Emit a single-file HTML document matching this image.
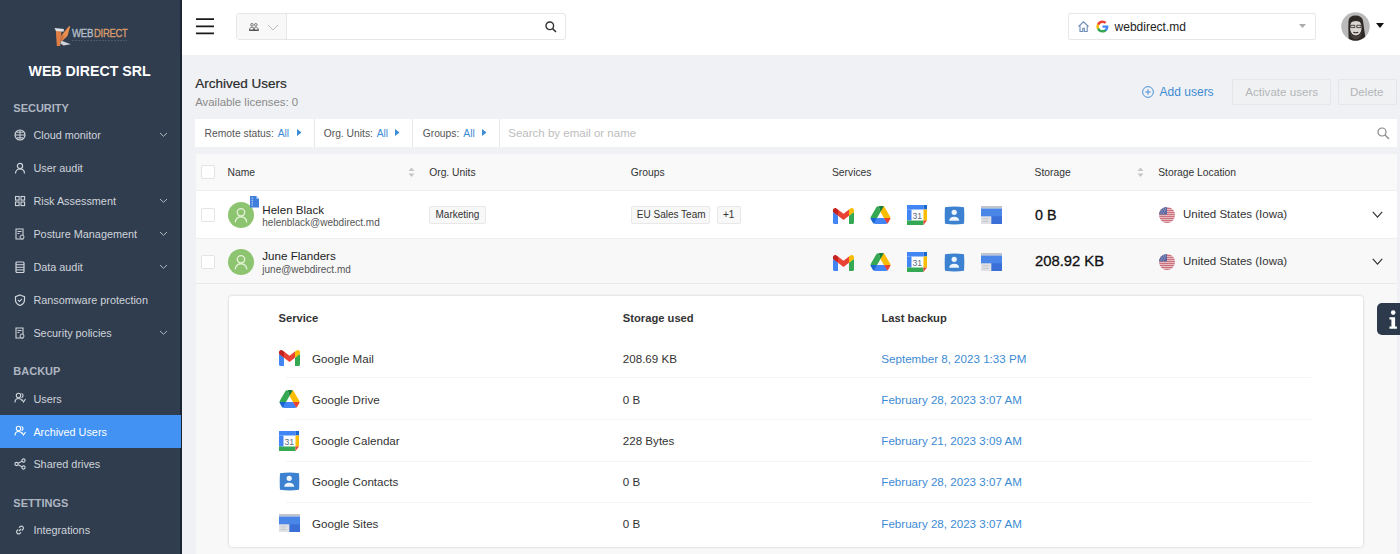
<!DOCTYPE html>
<html><head><meta charset="utf-8"><style>
html,body{margin:0;padding:0;width:1400px;height:554px;overflow:hidden;position:relative;font-family:'Liberation Sans', sans-serif}
.t{position:absolute;line-height:1;white-space:nowrap}
</style></head><body>
<div style="position:absolute;left:0px;top:0px;width:1400px;height:554px;background:#eff1f4"></div>
<div style="position:absolute;left:0px;top:0px;width:180px;height:554px;background:#2f3d4f"></div>
<div style="position:absolute;left:180px;top:0px;width:2px;height:554px;background:#1c2534"></div>
<div style="position:absolute;left:182px;top:0px;width:1218px;height:55px;background:#fff"></div>
<svg style="position:absolute;left:54px;top:25px" width="18" height="22" viewBox="0 0 18 22"><path d="M1.8 5.5 L7.5 6.5 L6.2 21 L2.8 21 Z" fill="#e07f45"/>
<path d="M10 7 L15.2 1 L16.2 1.5 L13.5 11 L7 17 L6.6 12 Z" fill="#ea8c4c"/>
<path d="M0.5 3 L10 4 L9.5 6.8 L2 6 Z" fill="#dfe2e5"/>
<path d="M7 15.5 L16.8 19.2 L9.5 20.5 L6.5 18.5 Z" fill="#cfd3d7"/>
<path d="M6.5 12 L10.5 10 L7.3 17z" fill="#c8703e"/></svg>
<div class="t" style="left:72.0px;top:28.24px;font-size:10.7px;color:#b5bec8;font-weight:400;transform:scaleX(0.9);transform-origin:left;-webkit-text-stroke:0.35px #b5bec8;letter-spacing:-0.3px">WEB</div>
<div class="t" style="left:94.3px;top:28.24px;font-size:10.7px;color:#d99c6c;font-weight:400;transform:scaleX(0.88);transform-origin:left;-webkit-text-stroke:0.35px #d99c6c;letter-spacing:-0.3px">DIRECT</div>
<div style="position:absolute;left:72px;top:39.5px;width:55px;height:1.5px;background:repeating-linear-gradient(90deg,#7d8b9c 0 2px,transparent 2px 3px);opacity:.35"></div>
<div class="t" style="left:28.5px;top:63.68px;font-size:14.2px;color:#ffffff;font-weight:700;">WEB DIRECT SRL</div>
<div class="t" style="left:13.3px;top:102.89px;font-size:11px;color:#aeb6c1;font-weight:700;">SECURITY</div>
<svg style="position:absolute;left:14px;top:128.7px" width="12" height="12" viewBox="0 0 12 12"><circle cx="6" cy="6" r="5" fill="none" stroke="#cfd4da" stroke-width="1.2"/><path d="M1 6h10M6 1v10M3 3.2h6M3 8.8h6" stroke="#cfd4da" stroke-width="1"/></svg>
<div class="t" style="left:33.4px;top:130.02px;font-size:10.85px;color:#cfd4da;font-weight:400;">Cloud monitor</div>
<svg style="position:absolute;left:158.5px;top:132.39999999999998px" width="9" height="6" viewBox="0 0 9 6"><path d="M1 1l3.5 3.3L8 1" fill="none" stroke="#b3bac3" stroke-width="1"/></svg>
<svg style="position:absolute;left:14px;top:161.7px" width="12" height="12" viewBox="0 0 12 12"><circle cx="6" cy="4" r="2.6" fill="none" stroke="#cfd4da" stroke-width="1.2"/><path d="M1.5 11.5c0-3 2-4.5 4.5-4.5s4.5 1.5 4.5 4.5" fill="none" stroke="#cfd4da" stroke-width="1.2"/></svg>
<div class="t" style="left:33.4px;top:163.02px;font-size:10.85px;color:#cfd4da;font-weight:400;">User audit</div>
<svg style="position:absolute;left:14px;top:194.7px" width="12" height="12" viewBox="0 0 12 12"><rect x="1.5" y="1.5" width="3.6" height="3.6" fill="none" stroke="#cfd4da" stroke-width="1.1"/><rect x="7" y="1.5" width="3.6" height="3.6" fill="none" stroke="#cfd4da" stroke-width="1.1"/><rect x="1.5" y="7" width="3.6" height="3.6" fill="none" stroke="#cfd4da" stroke-width="1.1"/><rect x="7" y="7" width="3.6" height="3.6" fill="none" stroke="#cfd4da" stroke-width="1.1"/></svg>
<div class="t" style="left:33.4px;top:196.02px;font-size:10.85px;color:#cfd4da;font-weight:400;">Risk Assessment</div>
<svg style="position:absolute;left:158.5px;top:198.39999999999998px" width="9" height="6" viewBox="0 0 9 6"><path d="M1 1l3.5 3.3L8 1" fill="none" stroke="#b3bac3" stroke-width="1"/></svg>
<svg style="position:absolute;left:14px;top:227.7px" width="12" height="12" viewBox="0 0 12 12"><path d="M2 1h7v10H2z" fill="none" stroke="#cfd4da" stroke-width="1.1"/><path d="M3.5 3.5h4M3.5 5.5h2" stroke="#cfd4da" stroke-width="1"/><circle cx="8" cy="9" r="2" fill="#2f3d4f" stroke="#cfd4da" stroke-width="1"/></svg>
<div class="t" style="left:33.4px;top:229.02px;font-size:10.85px;color:#cfd4da;font-weight:400;">Posture Management</div>
<svg style="position:absolute;left:158.5px;top:231.39999999999998px" width="9" height="6" viewBox="0 0 9 6"><path d="M1 1l3.5 3.3L8 1" fill="none" stroke="#b3bac3" stroke-width="1"/></svg>
<svg style="position:absolute;left:14px;top:260.7px" width="12" height="12" viewBox="0 0 12 12"><rect x="2" y="1" width="8" height="10.5" rx="1" fill="none" stroke="#cfd4da" stroke-width="1.2"/><path d="M2 3.7h8M2 6.3h8M2 8.9h8" stroke="#cfd4da" stroke-width="1"/></svg>
<div class="t" style="left:33.4px;top:262.02px;font-size:10.85px;color:#cfd4da;font-weight:400;">Data audit</div>
<svg style="position:absolute;left:158.5px;top:264.4px" width="9" height="6" viewBox="0 0 9 6"><path d="M1 1l3.5 3.3L8 1" fill="none" stroke="#b3bac3" stroke-width="1"/></svg>
<svg style="position:absolute;left:14px;top:293.7px" width="12" height="12" viewBox="0 0 12 12"><path d="M6 1L10.5 2.6V6c0 3-2.2 4.6-4.5 5.5C3.7 10.6 1.5 9 1.5 6V2.6z" fill="none" stroke="#cfd4da" stroke-width="1.2"/><path d="M4 6l1.5 1.5L8 4.8" fill="none" stroke="#cfd4da" stroke-width="1.1"/></svg>
<div class="t" style="left:33.4px;top:295.02px;font-size:10.85px;color:#cfd4da;font-weight:400;">Ransomware protection</div>
<svg style="position:absolute;left:14px;top:326.7px" width="12" height="12" viewBox="0 0 12 12"><path d="M2 1h7v10H2z" fill="none" stroke="#cfd4da" stroke-width="1.1"/><path d="M3.5 3.5h4M3.5 5.5h2" stroke="#cfd4da" stroke-width="1"/><circle cx="8" cy="9" r="2" fill="#2f3d4f" stroke="#cfd4da" stroke-width="1"/></svg>
<div class="t" style="left:33.4px;top:328.02px;font-size:10.85px;color:#cfd4da;font-weight:400;">Security policies</div>
<svg style="position:absolute;left:158.5px;top:330.4px" width="9" height="6" viewBox="0 0 9 6"><path d="M1 1l3.5 3.3L8 1" fill="none" stroke="#b3bac3" stroke-width="1"/></svg>
<div class="t" style="left:13.3px;top:366.29px;font-size:11px;color:#aeb6c1;font-weight:700;">BACKUP</div>
<svg style="position:absolute;left:14px;top:392.2px" width="12" height="12" viewBox="0 0 12 12"><circle cx="4.5" cy="3.5" r="2.2" fill="none" stroke="#cfd4da" stroke-width="1.1"/><path d="M1 10.5c0-2.5 1.5-4 3.5-4s3 1 3.3 2.2" fill="none" stroke="#cfd4da" stroke-width="1.1"/><path d="M7.5 1.5a2.2 2.2 0 0 1 0 4.2M8 7.5l1.5 2.5 2-3" fill="none" stroke="#cfd4da" stroke-width="1.1"/></svg>
<div class="t" style="left:33.4px;top:393.52px;font-size:10.85px;color:#cfd4da;font-weight:400;">Users</div>
<div style="position:absolute;left:0px;top:414.5px;width:181px;height:33.5px;background:#4192f2"></div>
<svg style="position:absolute;left:14px;top:425.3px" width="12" height="12" viewBox="0 0 12 12"><circle cx="4.5" cy="3.5" r="2.2" fill="none" stroke="#ffffff" stroke-width="1.1"/><path d="M1 10.5c0-2.5 1.5-4 3.5-4s3 1 3.3 2.2" fill="none" stroke="#ffffff" stroke-width="1.1"/><path d="M7.5 1.5a2.2 2.2 0 0 1 0 4.2M8 7.5l1.5 2.5 2-3" fill="none" stroke="#ffffff" stroke-width="1.1"/></svg>
<div class="t" style="left:33.4px;top:426.62px;font-size:10.85px;color:#ffffff;font-weight:400;">Archived Users</div>
<svg style="position:absolute;left:14px;top:458.1px" width="12" height="12" viewBox="0 0 12 12"><circle cx="2.5" cy="6" r="1.6" fill="none" stroke="#cfd4da" stroke-width="1.1"/><circle cx="9.5" cy="2.5" r="1.6" fill="none" stroke="#cfd4da" stroke-width="1.1"/><circle cx="9.5" cy="9.5" r="1.6" fill="none" stroke="#cfd4da" stroke-width="1.1"/><path d="M4 5.2l4-2M4 6.8l4 2" stroke="#cfd4da" stroke-width="1.1"/></svg>
<div class="t" style="left:33.4px;top:459.42px;font-size:10.85px;color:#cfd4da;font-weight:400;">Shared drives</div>
<div class="t" style="left:13.3px;top:498.39px;font-size:11px;color:#aeb6c1;font-weight:700;">SETTINGS</div>
<svg style="position:absolute;left:14px;top:523.9px" width="12" height="12" viewBox="0 0 12 12"><path d="M5 7l2-2M4.2 5.5L3 6.7a2 2 0 0 0 2.8 2.8L7 8.3M7.8 6.5L9 5.3A2 2 0 0 0 6.2 2.5L5 3.7" fill="none" stroke="#cfd4da" stroke-width="1.2"/></svg>
<div class="t" style="left:33.4px;top:525.22px;font-size:10.85px;color:#cfd4da;font-weight:400;">Integrations</div>
<svg style="position:absolute;left:196px;top:17px" width="18" height="18" viewBox="0 0 18 18"><path d="M0 2.1h18M0 9.3h18M0 16.3h18" stroke="#1a1a1a" stroke-width="1.7"/></svg>
<div style="position:absolute;left:236px;top:13px;width:330px;height:27px;background:#fff;border:1px solid #e6e6e6;border-radius:3px;box-sizing:border-box"></div>
<div style="position:absolute;left:237px;top:14px;width:50px;height:25px;background:#f8f8f8"></div>
<div style="position:absolute;left:286px;top:14px;width:1px;height:25px;background:#e6e6e6"></div>
<svg style="position:absolute;left:248.5px;top:23px" width="10" height="8" viewBox="0 0 10 8"><circle cx="3" cy="1.8" r="1.3" fill="none" stroke="#666" stroke-width=".9"/><circle cx="6.8" cy="1.8" r="1.3" fill="none" stroke="#666" stroke-width=".9"/><path d="M0.4 7.2c0-1.9 1.1-3 2.6-3s2.6 1.1 2.6 3zM4.4 7.2c.2-1.9 1-3 2.4-3s2.6 1.1 2.6 3z" fill="none" stroke="#666" stroke-width=".9"/><path d="M0.3 7.3h9.3" stroke="#444" stroke-width="1.1"/></svg>
<svg style="position:absolute;left:267px;top:24px" width="12" height="7" viewBox="0 0 12 7"><path d="M1 1l5 5 5-5" fill="none" stroke="#bbb" stroke-width="1"/></svg>
<svg style="position:absolute;left:545px;top:21px" width="12" height="12" viewBox="0 0 12 12"><circle cx="4.8" cy="4.8" r="3.8" fill="none" stroke="#333" stroke-width="1.4"/><path d="M7.6 7.6L11 11" stroke="#333" stroke-width="1.5"/></svg>
<div style="position:absolute;left:1068px;top:13px;width:248px;height:27px;background:#fff;border:1px solid #e6e6e6;border-radius:2px;box-sizing:border-box"></div>
<svg style="position:absolute;left:1077px;top:20px" width="13" height="13" viewBox="0 0 13 13"><path d="M1.5 6.5L6.5 1.8l5 4.7M3 5.3v6.2h2.8V8.3h1.6v3.2h2.8V5.3" fill="none" stroke="#6d8fb8" stroke-width="1.1"/></svg>
<svg style="position:absolute;left:1096px;top:20px" width="13" height="13" viewBox="0 0 13 13"><path d="M12.4 6.6c0-.4 0-.8-.1-1.2H6.5v2.3h3.3a2.8 2.8 0 0 1-1.2 1.8v1.5h2c1.1-1 1.8-2.6 1.8-4.4z" fill="#4285F4"/>
<path d="M6.5 12.5c1.6 0 3-.5 4-1.5l-2-1.5c-.5.4-1.2.6-2 .6-1.6 0-2.9-1-3.4-2.4H1.1v1.6a6 6 0 0 0 5.4 3.2z" fill="#34A853"/>
<path d="M3.1 7.7a3.6 3.6 0 0 1 0-2.4V3.7H1.1a6 6 0 0 0 0 5.6z" fill="#FBBC05"/>
<path d="M6.5 2.9c.9 0 1.7.3 2.3.9l1.7-1.7A6 6 0 0 0 1.1 3.7l2 1.6c.5-1.4 1.8-2.4 3.4-2.4z" fill="#EA4335"/></svg>
<div class="t" style="left:1114.6px;top:20.54px;font-size:12px;color:#222;font-weight:400;">webdirect.md</div>
<svg style="position:absolute;left:1298.5px;top:24.2px" width="7" height="4" viewBox="0 0 7 4"><path d="M0 0h7L3.5 4z" fill="#ababab"/></svg>
<svg style="position:absolute;left:1341px;top:12px" width="29" height="29" viewBox="0 0 29 29"><defs><clipPath id="av"><circle cx="14.5" cy="14.5" r="14.2"/></clipPath></defs>
<circle cx="14.5" cy="14.5" r="14.2" fill="#bababa"/>
<g clip-path="url(#av)">
<path d="M7.5 9 Q8 3.5 14.5 3.5 Q21 3.5 22 9 L25 30 L8 30 Q7 20 7.5 9z" fill="#2e2927"/>
<ellipse cx="14.8" cy="15.5" rx="5.8" ry="8" fill="#dcd7d2"/>
<path d="M8.5 11.5 Q9 6 15 6 Q20.5 6 21 11.5 Q19 8.8 14.8 9 Q10.5 9 8.5 11.5z" fill="#2e2927"/>
<path d="M9.6 13.3h4.2v2.3H9.6zM15.8 13.3h4.2v2.3h-4.2z" fill="none" stroke="#3a3431" stroke-width=".9"/>
<path d="M9.2 18.5 Q10 24.5 14.8 24.5 Q19.6 24.5 20.6 18.5 Q20.6 26.5 14.8 27.5 Q9.2 26.5 9.2 18.5z" fill="#4b423d"/>
<path d="M12.3 20.2q2.5 1 5 0" stroke="#3a302b" stroke-width="1.1" fill="none"/>
</g></svg>
<svg style="position:absolute;left:1376px;top:23px" width="8" height="5" viewBox="0 0 8 5"><path d="M0 0h8L4 5z" fill="#111"/></svg>
<div class="t" style="left:195.3px;top:76.97px;font-size:13.5px;color:#2a2a2a;font-weight:400;-webkit-text-stroke:0.2px #2a2a2a">Archived Users</div>
<div class="t" style="left:195.2px;top:96.65px;font-size:11.4px;color:#8a8a8a;font-weight:400;">Available licenses: 0</div>
<svg style="position:absolute;left:1142px;top:86px" width="12" height="12" viewBox="0 0 12 12"><circle cx="6" cy="6" r="5.4" fill="none" stroke="#4a90d6" stroke-width="1"/><path d="M6 3.3v5.4M3.3 6h5.4" stroke="#4a90d6" stroke-width="1"/></svg>
<div class="t" style="left:1159.6px;top:85.84px;font-size:12px;color:#3d8bd4;font-weight:400;">Add users</div>
<div style="position:absolute;left:1232px;top:79px;width:99px;height:26px;background:#f0f1f3;border:1px solid #e4e6e9;border-radius:2px;box-sizing:border-box"></div>
<div class="t" style="left:1245.3px;top:86.18px;font-size:11.6px;color:#b4b6b9;font-weight:400;">Activate users</div>
<div style="position:absolute;left:1338px;top:79px;width:59px;height:26px;background:#f0f1f3;border:1px solid #e4e6e9;border-radius:2px;box-sizing:border-box"></div>
<div class="t" style="left:1350.0px;top:86.18px;font-size:11.6px;color:#b4b6b9;font-weight:400;">Delete</div>
<div style="position:absolute;left:195px;top:119px;width:1202px;height:28px;background:#fff"></div>
<div style="position:absolute;left:314px;top:119px;width:1px;height:28px;background:#e8e8e8"></div>
<div style="position:absolute;left:412px;top:119px;width:1px;height:28px;background:#e8e8e8"></div>
<div style="position:absolute;left:499px;top:119px;width:1px;height:28px;background:#e8e8e8"></div>
<div class="t" style="left:204.6px;top:129.08px;font-size:10.3px;color:#555;font-weight:400;">Remote status:</div>
<div class="t" style="left:277.7px;top:129.08px;font-size:10.3px;color:#3d8bd4;font-weight:400;">All</div>
<svg style="position:absolute;left:296.5px;top:129px" width="5" height="7" viewBox="0 0 5 7"><path d="M0 0L4.5 3.5L0 7z" fill="#3d8bd4"/></svg>
<div class="t" style="left:323.7px;top:129.08px;font-size:10.3px;color:#555;font-weight:400;">Org. Units:</div>
<div class="t" style="left:376.7px;top:129.08px;font-size:10.3px;color:#3d8bd4;font-weight:400;">All</div>
<svg style="position:absolute;left:395px;top:129px" width="5" height="7" viewBox="0 0 5 7"><path d="M0 0L4.5 3.5L0 7z" fill="#3d8bd4"/></svg>
<div class="t" style="left:422.7px;top:129.08px;font-size:10.3px;color:#555;font-weight:400;">Groups:</div>
<div class="t" style="left:463.3px;top:129.08px;font-size:10.3px;color:#3d8bd4;font-weight:400;">All</div>
<svg style="position:absolute;left:482px;top:129px" width="5" height="7" viewBox="0 0 5 7"><path d="M0 0L4.5 3.5L0 7z" fill="#3d8bd4"/></svg>
<div class="t" style="left:508.3px;top:128.17px;font-size:11.5px;color:#bdbdbd;font-weight:400;">Search by email or name</div>
<svg style="position:absolute;left:1377px;top:127px" width="13" height="13" viewBox="0 0 13 13"><circle cx="5" cy="5" r="4" fill="none" stroke="#888" stroke-width="1.2"/><path d="M8 8l4 4" stroke="#888" stroke-width="1.3"/></svg>
<div style="position:absolute;left:196px;top:154px;width:1201px;height:400px;background:#f8f8f9"></div>
<div style="position:absolute;left:196px;top:154px;width:1201px;height:36px;background:#f9f9fa"></div>
<div style="position:absolute;left:196px;top:190px;width:1201px;height:1px;background:#efefef"></div>
<div style="position:absolute;left:196px;top:191px;width:1201px;height:47px;background:#ffffff"></div>
<div style="position:absolute;left:196px;top:238px;width:1201px;height:1px;background:#efefef"></div>
<div style="position:absolute;left:196px;top:239px;width:1201px;height:44px;background:#f8f8f9"></div>
<div style="position:absolute;left:196px;top:283px;width:1201px;height:1px;background:#e9e9ea"></div>
<div style="position:absolute;left:201px;top:165px;width:14px;height:14px;background:#fff;border:1px solid #e4e4e4;border-radius:2px;box-sizing:border-box"></div>
<div class="t" style="left:227.6px;top:167.88px;font-size:10.3px;color:#333;font-weight:400;">Name</div>
<svg style="position:absolute;left:408px;top:167px" width="7" height="11" viewBox="0 0 7 11"><path d="M0.5 4L3.5 0.5L6.5 4z M0.5 6.5L3.5 10L6.5 6.5z" fill="#c5c5c5"/></svg>
<div class="t" style="left:429.2px;top:167.88px;font-size:10.3px;color:#333;font-weight:400;">Org. Units</div>
<div class="t" style="left:630.8px;top:167.88px;font-size:10.3px;color:#333;font-weight:400;">Groups</div>
<div class="t" style="left:832.0px;top:167.88px;font-size:10.3px;color:#333;font-weight:400;">Services</div>
<div class="t" style="left:1034.6px;top:167.88px;font-size:10.3px;color:#333;font-weight:400;">Storage</div>
<svg style="position:absolute;left:1137px;top:167px" width="7" height="11" viewBox="0 0 7 11"><path d="M0.5 4L3.5 0.5L6.5 4z M0.5 6.5L3.5 10L6.5 6.5z" fill="#c5c5c5"/></svg>
<div class="t" style="left:1158.2px;top:167.88px;font-size:10.3px;color:#333;font-weight:400;">Storage Location</div>
<div style="position:absolute;left:201px;top:208px;width:14px;height:14px;background:#fff;border:1px solid #e4e4e4;border-radius:2px;box-sizing:border-box"></div>
<svg style="position:absolute;left:228px;top:202px" width="26" height="26" viewBox="0 0 26 26"><circle cx="13" cy="13" r="13" fill="#8dc46f"/><circle cx="13" cy="10.3" r="3.7" fill="none" stroke="#e6f3dc" stroke-width="1.3"/><path d="M7.2 20.3c.5-3.4 2.9-5.4 5.8-5.4s5.3 2 5.8 5.4" fill="none" stroke="#e6f3dc" stroke-width="1.3"/></svg>
<svg style="position:absolute;left:250px;top:196px" width="9" height="12" viewBox="0 0 9 12"><path d="M0 0h6.3l2.7 2.8V11.5H0z" fill="#3f7fdb"/><path d="M6.3 0v2.8h2.7z" fill="#b9d2f3"/><path d="M2.2 1.5v1.2M2.2 3.8v1.2M2.2 6.1v1.2M2.2 8.4v1.2" stroke="#e3eefb" stroke-width="1"/></svg>
<div class="t" style="left:262.3px;top:203.98px;font-size:11.6px;color:#222;font-weight:400;">Helen Black</div>
<div class="t" style="left:262.3px;top:217.84px;font-size:10px;color:#555;font-weight:400;">helenblack@webdirect.md</div>
<div style="position:absolute;left:429px;top:206px;width:57px;height:18px;background:#f8f8f8;border:1px solid #e8e8e8;border-radius:2px;box-sizing:border-box"></div>
<div class="t" style="left:435.5px;top:210.23px;font-size:10px;color:#333;font-weight:400;">Marketing</div>
<div style="position:absolute;left:631px;top:206px;width:79px;height:18px;background:#f8f8f8;border:1px solid #e8e8e8;border-radius:2px;box-sizing:border-box"></div>
<div class="t" style="left:636.8px;top:210.23px;font-size:10px;color:#333;font-weight:400;">EU Sales Team</div>
<div style="position:absolute;left:717px;top:206px;width:24px;height:18px;background:#f8f8f8;border:1px solid #e8e8e8;border-radius:2px;box-sizing:border-box"></div>
<div class="t" style="left:723.0px;top:210.23px;font-size:10px;color:#333;font-weight:400;">+1</div>
<svg style="position:absolute;left:832.5px;top:207.5px" width="21" height="16" viewBox="3 8 42 32"><path fill="#34a853" d="M45,16.2l-5,2.75l-5,4.75L35,40h7c1.657,0,3-1.343,3-3V16.2z"/>
<path fill="#4285f4" d="M3,16.2l3.614,1.71L13,23.7V40H6c-1.657,0-3-1.343-3-3V16.2z"/>
<polygon fill="#ea4335" points="35,11.2 24,19.45 13,11.2 12,17 13,23.7 24,31.95 35,23.7 36,17"/>
<path fill="#c5221f" d="M3,12.298V16.2l10,7.5V11.2L9.876,8.859C9.132,8.301,8.228,8,7.298,8h0C4.924,8,3,9.924,3,12.298z"/>
<path fill="#fbbc04" d="M45,12.298V16.2l-10,7.5V11.2l3.124-2.341C38.868,8.301,39.772,8,40.702,8h0 C43.076,8,45,9.924,45,12.298z"/></svg>
<svg style="position:absolute;left:869.8px;top:206px" width="21" height="18" viewBox="4.14 6 39.72 36"><path fill="#4285f4" d="M38.59,39c-0.535,0.93-0.298,1.68-1.195,2.197C36.498,41.715,35.465,42,34.39,42H13.61 c-1.074,0-2.106-0.285-3.004-0.802C9.708,40.681,9.945,39.930,9.410,39l7.670-9h13.840L38.590,39z"/>
<path fill="#fbbc04" d="M27.463,6.999c1.073-0.002,2.104-0.716,3.001-0.198c0.897,0.519,1.660,1.270,2.197,2.201l10.390,17.996 c0.537,0.930,0.807,1.967,0.808,3.002c0.001,1.037-1.267,2.073-1.806,3.001l-11.127-3.005l-6.924-11.993L27.463,6.999z"/>
<path fill="#ea4335" d="M43.860,30c0,1.040-0.270,2.070-0.810,3l-3.670,6.350c-0.530,0.780-1.210,1.400-1.990,1.850L30.920,30H43.860z"/>
<path fill="#34a853" d="M5.947,33.001c-0.538-0.928-1.806-1.964-1.806-3c0.001-1.036,0.270-2.073,0.808-3.004l10.390-17.996 c0.537-0.930,1.300-1.682,2.196-2.200c0.897-0.519,1.929,0.195,3.002,0.197l3.459,11.009l-6.922,11.989L5.947,33.001z"/>
<path fill="#1967d2" d="M17.080,30l-6.470,11.200c-0.780-0.450-1.460-1.070-1.990-1.850L4.950,33c-0.540-0.930-0.810-1.960-0.810-3H17.080z"/>
<path fill="#188038" d="M20.560,6.800c0.900-0.520,1.930-0.800,3-0.800h3.880c1.070,0,2.100,0.280,3,0.800L24,18L20.560,6.800z"/></svg>
<svg style="position:absolute;left:907.3px;top:205px" width="20" height="20" viewBox="0 0 20 20"><rect x="0" y="0" width="20" height="20" fill="#fff"/>
<rect x="0" y="0" width="16.5" height="4.5" fill="#4285f4"/><rect x="0" y="4.5" width="4.5" height="11" fill="#4285f4"/>
<rect x="16.5" y="0" width="3.5" height="4.5" fill="#1967d2"/>
<rect x="16.5" y="4.5" width="3.5" height="11" fill="#fbbc04"/>
<rect x="0" y="15.5" width="16.5" height="4.5" fill="#34a853"/>
<path d="M16.5 15.5h3.5l-3.5 4.5z" fill="#ea4335"/>
<text x="10.3" y="13.6" font-family="Liberation Sans" font-size="8.6" text-anchor="middle" fill="#5b6b85">31</text></svg>
<svg style="position:absolute;left:944px;top:205.6px" width="21" height="19" viewBox="0 0 21 19"><path d="M1 1.2 Q10.5 -.3 20 1.2 Q20.6 9.5 20 17.8 Q10.5 19.3 1 17.8 Q.4 9.5 1 1.2z" fill="#3d82d0"/>
<circle cx="10.2" cy="6.3" r="2.6" fill="#eef5fd"/><path d="M5.2 14.8c0-2.6 2.2-4.1 5-4.1s5 1.5 5 4.1z" fill="#eef5fd"/></svg>
<svg style="position:absolute;left:981.3px;top:206px" width="21" height="18" viewBox="0 0 21 18"><rect x="0" y="0" width="21" height="2.5" fill="#c0c4cc"/><rect x="0" y="2.5" width="21" height="15.5" fill="#4a86e8"/>
<rect x="10.3" y="10.3" width="10.7" height="7.7" fill="#3a6fd8"/>
<rect x="0" y="10.3" width="10.3" height="7.7" fill="#dfe1e5"/><path d="M1.5 12.8h6M1.5 15.3h6" stroke="#c2c5ca" stroke-width="1"/></svg>
<div class="t" style="left:1035.0px;top:208.20px;font-size:14.3px;color:#111;font-weight:400;-webkit-text-stroke:0.3px #111">0 B</div>
<svg style="position:absolute;left:1159px;top:207px" width="16" height="16" viewBox="0 0 16 16"><defs><clipPath id="fc207"><circle cx="8" cy="8" r="8"/></clipPath></defs><g clip-path="url(#fc207)"><rect width="16" height="16" fill="#fff"/><rect y="0.6" width="16" height="1.2" fill="#c0505f"/><rect y="2.6" width="16" height="1.2" fill="#c0505f"/><rect y="4.6" width="16" height="1.2" fill="#c0505f"/><rect y="6.6" width="16" height="1.2" fill="#c0505f"/><rect y="8.6" width="16" height="1.2" fill="#c0505f"/><rect y="10.6" width="16" height="1.2" fill="#c0505f"/><rect y="12.6" width="16" height="1.2" fill="#c0505f"/><rect y="14.6" width="16" height="1.2" fill="#c0505f"/><rect width="8" height="7.5" fill="#5c6aa3"/><path d="M1.5 2h1M4 2h1M6 2h1M2.5 4h1M5 4h1M1.5 6h1M4 6h1" stroke="#fff" stroke-width=".8" opacity=".6"/></g></svg>
<div class="t" style="left:1183.0px;top:209.47px;font-size:11.5px;color:#333;font-weight:400;">United States (Iowa)</div>
<svg style="position:absolute;left:1372px;top:210.5px" width="11" height="8" viewBox="0 0 11 8"><path d="M0.8 0.8l4.7 5.4l4.7-5.4" fill="none" stroke="#333" stroke-width="1.2"/></svg>
<div style="position:absolute;left:201px;top:255px;width:14px;height:14px;background:#fff;border:1px solid #e4e4e4;border-radius:2px;box-sizing:border-box"></div>
<svg style="position:absolute;left:228px;top:249px" width="26" height="26" viewBox="0 0 26 26"><circle cx="13" cy="13" r="13" fill="#8dc46f"/><circle cx="13" cy="10.3" r="3.7" fill="none" stroke="#e6f3dc" stroke-width="1.3"/><path d="M7.2 20.3c.5-3.4 2.9-5.4 5.8-5.4s5.3 2 5.8 5.4" fill="none" stroke="#e6f3dc" stroke-width="1.3"/></svg>
<div class="t" style="left:262.3px;top:250.48px;font-size:11.6px;color:#222;font-weight:400;">June Flanders</div>
<div class="t" style="left:262.3px;top:264.54px;font-size:10px;color:#555;font-weight:400;">june@webdirect.md</div>
<svg style="position:absolute;left:832.5px;top:254.5px" width="21" height="16" viewBox="3 8 42 32"><path fill="#34a853" d="M45,16.2l-5,2.75l-5,4.75L35,40h7c1.657,0,3-1.343,3-3V16.2z"/>
<path fill="#4285f4" d="M3,16.2l3.614,1.71L13,23.7V40H6c-1.657,0-3-1.343-3-3V16.2z"/>
<polygon fill="#ea4335" points="35,11.2 24,19.45 13,11.2 12,17 13,23.7 24,31.95 35,23.7 36,17"/>
<path fill="#c5221f" d="M3,12.298V16.2l10,7.5V11.2L9.876,8.859C9.132,8.301,8.228,8,7.298,8h0C4.924,8,3,9.924,3,12.298z"/>
<path fill="#fbbc04" d="M45,12.298V16.2l-10,7.5V11.2l3.124-2.341C38.868,8.301,39.772,8,40.702,8h0 C43.076,8,45,9.924,45,12.298z"/></svg>
<svg style="position:absolute;left:869.8px;top:253px" width="21" height="18" viewBox="4.14 6 39.72 36"><path fill="#4285f4" d="M38.59,39c-0.535,0.93-0.298,1.68-1.195,2.197C36.498,41.715,35.465,42,34.39,42H13.61 c-1.074,0-2.106-0.285-3.004-0.802C9.708,40.681,9.945,39.930,9.410,39l7.670-9h13.840L38.590,39z"/>
<path fill="#fbbc04" d="M27.463,6.999c1.073-0.002,2.104-0.716,3.001-0.198c0.897,0.519,1.660,1.270,2.197,2.201l10.390,17.996 c0.537,0.930,0.807,1.967,0.808,3.002c0.001,1.037-1.267,2.073-1.806,3.001l-11.127-3.005l-6.924-11.993L27.463,6.999z"/>
<path fill="#ea4335" d="M43.860,30c0,1.040-0.270,2.070-0.810,3l-3.670,6.350c-0.530,0.780-1.210,1.400-1.990,1.850L30.920,30H43.860z"/>
<path fill="#34a853" d="M5.947,33.001c-0.538-0.928-1.806-1.964-1.806-3c0.001-1.036,0.270-2.073,0.808-3.004l10.390-17.996 c0.537-0.930,1.300-1.682,2.196-2.200c0.897-0.519,1.929,0.195,3.002,0.197l3.459,11.009l-6.922,11.989L5.947,33.001z"/>
<path fill="#1967d2" d="M17.080,30l-6.470,11.200c-0.780-0.450-1.460-1.070-1.990-1.850L4.950,33c-0.540-0.930-0.810-1.960-0.810-3H17.080z"/>
<path fill="#188038" d="M20.560,6.800c0.900-0.520,1.930-0.800,3-0.800h3.880c1.070,0,2.100,0.280,3,0.800L24,18L20.560,6.800z"/></svg>
<svg style="position:absolute;left:907.3px;top:252px" width="20" height="20" viewBox="0 0 20 20"><rect x="0" y="0" width="20" height="20" fill="#fff"/>
<rect x="0" y="0" width="16.5" height="4.5" fill="#4285f4"/><rect x="0" y="4.5" width="4.5" height="11" fill="#4285f4"/>
<rect x="16.5" y="0" width="3.5" height="4.5" fill="#1967d2"/>
<rect x="16.5" y="4.5" width="3.5" height="11" fill="#fbbc04"/>
<rect x="0" y="15.5" width="16.5" height="4.5" fill="#34a853"/>
<path d="M16.5 15.5h3.5l-3.5 4.5z" fill="#ea4335"/>
<text x="10.3" y="13.6" font-family="Liberation Sans" font-size="8.6" text-anchor="middle" fill="#5b6b85">31</text></svg>
<svg style="position:absolute;left:944px;top:252.6px" width="21" height="19" viewBox="0 0 21 19"><path d="M1 1.2 Q10.5 -.3 20 1.2 Q20.6 9.5 20 17.8 Q10.5 19.3 1 17.8 Q.4 9.5 1 1.2z" fill="#3d82d0"/>
<circle cx="10.2" cy="6.3" r="2.6" fill="#eef5fd"/><path d="M5.2 14.8c0-2.6 2.2-4.1 5-4.1s5 1.5 5 4.1z" fill="#eef5fd"/></svg>
<svg style="position:absolute;left:981.3px;top:253px" width="21" height="18" viewBox="0 0 21 18"><rect x="0" y="0" width="21" height="2.5" fill="#c0c4cc"/><rect x="0" y="2.5" width="21" height="15.5" fill="#4a86e8"/>
<rect x="10.3" y="10.3" width="10.7" height="7.7" fill="#3a6fd8"/>
<rect x="0" y="10.3" width="10.3" height="7.7" fill="#dfe1e5"/><path d="M1.5 12.8h6M1.5 15.3h6" stroke="#c2c5ca" stroke-width="1"/></svg>
<div class="t" style="left:1035.0px;top:253.77px;font-size:14.8px;color:#111;font-weight:400;-webkit-text-stroke:0.3px #111">208.92 KB</div>
<svg style="position:absolute;left:1159px;top:254px" width="16" height="16" viewBox="0 0 16 16"><defs><clipPath id="fc254"><circle cx="8" cy="8" r="8"/></clipPath></defs><g clip-path="url(#fc254)"><rect width="16" height="16" fill="#fff"/><rect y="0.6" width="16" height="1.2" fill="#c0505f"/><rect y="2.6" width="16" height="1.2" fill="#c0505f"/><rect y="4.6" width="16" height="1.2" fill="#c0505f"/><rect y="6.6" width="16" height="1.2" fill="#c0505f"/><rect y="8.6" width="16" height="1.2" fill="#c0505f"/><rect y="10.6" width="16" height="1.2" fill="#c0505f"/><rect y="12.6" width="16" height="1.2" fill="#c0505f"/><rect y="14.6" width="16" height="1.2" fill="#c0505f"/><rect width="8" height="7.5" fill="#5c6aa3"/><path d="M1.5 2h1M4 2h1M6 2h1M2.5 4h1M5 4h1M1.5 6h1M4 6h1" stroke="#fff" stroke-width=".8" opacity=".6"/></g></svg>
<div class="t" style="left:1183.0px;top:256.27px;font-size:11.5px;color:#333;font-weight:400;">United States (Iowa)</div>
<svg style="position:absolute;left:1372px;top:257.5px" width="11" height="8" viewBox="0 0 11 8"><path d="M0.8 0.8l4.7 5.4l4.7-5.4" fill="none" stroke="#333" stroke-width="1.2"/></svg>
<div style="position:absolute;left:229px;top:296px;width:1134px;height:251px;background:#fff;border-radius:3px;box-shadow:0 0 3px rgba(0,0,0,.18)"></div>
<div class="t" style="left:278.5px;top:312.52px;font-size:11.2px;color:#333;font-weight:700;">Service</div>
<div class="t" style="left:622.8px;top:312.52px;font-size:11.2px;color:#333;font-weight:700;">Storage used</div>
<div class="t" style="left:881.5px;top:312.52px;font-size:11.2px;color:#333;font-weight:700;">Last backup</div>
<svg style="position:absolute;left:278.5px;top:350.4px" width="21" height="16" viewBox="3 8 42 32"><path fill="#34a853" d="M45,16.2l-5,2.75l-5,4.75L35,40h7c1.657,0,3-1.343,3-3V16.2z"/>
<path fill="#4285f4" d="M3,16.2l3.614,1.71L13,23.7V40H6c-1.657,0-3-1.343-3-3V16.2z"/>
<polygon fill="#ea4335" points="35,11.2 24,19.45 13,11.2 12,17 13,23.7 24,31.95 35,23.7 36,17"/>
<path fill="#c5221f" d="M3,12.298V16.2l10,7.5V11.2L9.876,8.859C9.132,8.301,8.228,8,7.298,8h0C4.924,8,3,9.924,3,12.298z"/>
<path fill="#fbbc04" d="M45,12.298V16.2l-10,7.5V11.2l3.124-2.341C38.868,8.301,39.772,8,40.702,8h0 C43.076,8,45,9.924,45,12.298z"/></svg>
<div class="t" style="left:312.0px;top:352.58px;font-size:11.6px;color:#333;font-weight:400;">Google Mail</div>
<div class="t" style="left:622.8px;top:352.58px;font-size:11.6px;color:#333;font-weight:400;">208.69 KB</div>
<div class="t" style="left:881.3px;top:352.58px;font-size:11.6px;color:#3d8bd4;font-weight:400;">September 8, 2023 1:33 PM</div>
<div style="position:absolute;left:286px;top:377px;width:1025px;height:1px;background:#f4f4f4"></div>
<svg style="position:absolute;left:278.5px;top:390.2px" width="21" height="18" viewBox="4.14 6 39.72 36"><path fill="#4285f4" d="M38.59,39c-0.535,0.93-0.298,1.68-1.195,2.197C36.498,41.715,35.465,42,34.39,42H13.61 c-1.074,0-2.106-0.285-3.004-0.802C9.708,40.681,9.945,39.930,9.410,39l7.670-9h13.840L38.590,39z"/>
<path fill="#fbbc04" d="M27.463,6.999c1.073-0.002,2.104-0.716,3.001-0.198c0.897,0.519,1.660,1.270,2.197,2.201l10.390,17.996 c0.537,0.930,0.807,1.967,0.808,3.002c0.001,1.037-1.267,2.073-1.806,3.001l-11.127-3.005l-6.924-11.993L27.463,6.999z"/>
<path fill="#ea4335" d="M43.860,30c0,1.040-0.270,2.070-0.810,3l-3.670,6.350c-0.530,0.780-1.210,1.400-1.990,1.850L30.920,30H43.860z"/>
<path fill="#34a853" d="M5.947,33.001c-0.538-0.928-1.806-1.964-1.806-3c0.001-1.036,0.270-2.073,0.808-3.004l10.390-17.996 c0.537-0.930,1.300-1.682,2.196-2.200c0.897-0.519,1.929,0.195,3.002,0.197l3.459,11.009l-6.922,11.989L5.947,33.001z"/>
<path fill="#1967d2" d="M17.080,30l-6.470,11.200c-0.780-0.450-1.460-1.070-1.990-1.850L4.950,33c-0.540-0.930-0.810-1.960-0.810-3H17.080z"/>
<path fill="#188038" d="M20.560,6.800c0.900-0.520,1.930-0.800,3-0.800h3.880c1.070,0,2.100,0.280,3,0.800L24,18L20.560,6.800z"/></svg>
<div class="t" style="left:312.0px;top:393.88px;font-size:11.6px;color:#333;font-weight:400;">Google Drive</div>
<div class="t" style="left:622.8px;top:393.88px;font-size:11.6px;color:#333;font-weight:400;">0 B</div>
<div class="t" style="left:881.3px;top:393.88px;font-size:11.6px;color:#3d8bd4;font-weight:400;">February 28, 2023 3:07 AM</div>
<div style="position:absolute;left:286px;top:419px;width:1025px;height:1px;background:#f4f4f4"></div>
<svg style="position:absolute;left:279px;top:430.5px" width="20" height="20" viewBox="0 0 20 20"><rect x="0" y="0" width="20" height="20" fill="#fff"/>
<rect x="0" y="0" width="16.5" height="4.5" fill="#4285f4"/><rect x="0" y="4.5" width="4.5" height="11" fill="#4285f4"/>
<rect x="16.5" y="0" width="3.5" height="4.5" fill="#1967d2"/>
<rect x="16.5" y="4.5" width="3.5" height="11" fill="#fbbc04"/>
<rect x="0" y="15.5" width="16.5" height="4.5" fill="#34a853"/>
<path d="M16.5 15.5h3.5l-3.5 4.5z" fill="#ea4335"/>
<text x="10.3" y="13.6" font-family="Liberation Sans" font-size="8.6" text-anchor="middle" fill="#5b6b85">31</text></svg>
<div class="t" style="left:312.0px;top:435.18px;font-size:11.6px;color:#333;font-weight:400;">Google Calendar</div>
<div class="t" style="left:622.8px;top:435.18px;font-size:11.6px;color:#333;font-weight:400;">228 Bytes</div>
<div class="t" style="left:881.3px;top:435.18px;font-size:11.6px;color:#3d8bd4;font-weight:400;">February 21, 2023 3:09 AM</div>
<div style="position:absolute;left:286px;top:461px;width:1025px;height:1px;background:#f4f4f4"></div>
<svg style="position:absolute;left:278.5px;top:472.4px" width="21" height="19" viewBox="0 0 21 19"><path d="M1 1.2 Q10.5 -.3 20 1.2 Q20.6 9.5 20 17.8 Q10.5 19.3 1 17.8 Q.4 9.5 1 1.2z" fill="#3d82d0"/>
<circle cx="10.2" cy="6.3" r="2.6" fill="#eef5fd"/><path d="M5.2 14.8c0-2.6 2.2-4.1 5-4.1s5 1.5 5 4.1z" fill="#eef5fd"/></svg>
<div class="t" style="left:312.0px;top:476.48px;font-size:11.6px;color:#333;font-weight:400;">Google Contacts</div>
<div class="t" style="left:622.8px;top:476.48px;font-size:11.6px;color:#333;font-weight:400;">0 B</div>
<div class="t" style="left:881.3px;top:476.48px;font-size:11.6px;color:#3d8bd4;font-weight:400;">February 28, 2023 3:07 AM</div>
<div style="position:absolute;left:286px;top:502px;width:1025px;height:1px;background:#f4f4f4"></div>
<svg style="position:absolute;left:278.5px;top:514.0999999999999px" width="21" height="18" viewBox="0 0 21 18"><rect x="0" y="0" width="21" height="2.5" fill="#c0c4cc"/><rect x="0" y="2.5" width="21" height="15.5" fill="#4a86e8"/>
<rect x="10.3" y="10.3" width="10.7" height="7.7" fill="#3a6fd8"/>
<rect x="0" y="10.3" width="10.3" height="7.7" fill="#dfe1e5"/><path d="M1.5 12.8h6M1.5 15.3h6" stroke="#c2c5ca" stroke-width="1"/></svg>
<div class="t" style="left:312.0px;top:517.78px;font-size:11.6px;color:#333;font-weight:400;">Google Sites</div>
<div class="t" style="left:622.8px;top:517.78px;font-size:11.6px;color:#333;font-weight:400;">0 B</div>
<div class="t" style="left:881.3px;top:517.78px;font-size:11.6px;color:#3d8bd4;font-weight:400;">February 28, 2023 3:07 AM</div>
<div style="position:absolute;left:1377px;top:303px;width:30px;height:32px;background:#2c3a4b;border-radius:5px"></div>
<svg style="position:absolute;left:1386px;top:309px" width="12" height="22" viewBox="0 0 12 22"><circle cx="7.2" cy="3.6" r="2.3" fill="#fff"/><path d="M3.5 8.2h5.6v9.2h1.8v2.4H3.5v-2.4h1.9v-6.8H3.5z" fill="#fff"/></svg>
</body></html>
